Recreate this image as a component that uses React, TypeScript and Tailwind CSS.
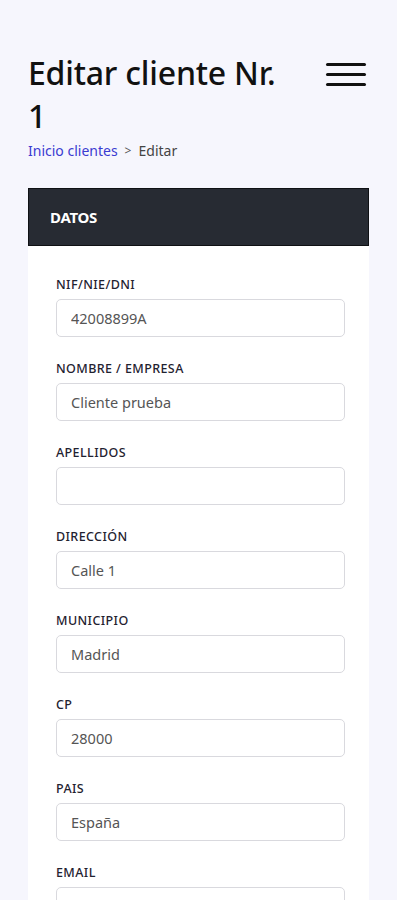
const fields = [
  { label: "NIF/NIE/DNI", value: "42008899A" },
  { label: "NOMBRE / EMPRESA", value: "Cliente prueba" },
  { label: "APELLIDOS", value: "" },
  { label: "DIRECCIÓN", value: "Calle 1" },
  { label: "MUNICIPIO", value: "Madrid" },
  { label: "CP", value: "28000" },
  { label: "PAIS", value: "España" },
  { label: "EMAIL", value: "" },
];

export default function App() {
  return (
    <div
      className="min-h-screen bg-[#f6f6fd] px-7 pt-[51px]"
      style={{ fontFamily: '"Noto Sans", "Open Sans", sans-serif' }}
    >
      {/* Header */}
      <div className="flex items-start justify-between">
        <h1 className="text-[32px] leading-[43px] font-medium text-[#111] tracking-[-0.2px] w-[262px]">
          Editar cliente Nr. 1
        </h1>
        <button className="mt-[12px] mr-[3px] flex flex-col gap-[7px]">
          <span className="block w-[40px] h-[3px] bg-[#111] rounded-sm" />
          <span className="block w-[40px] h-[3px] bg-[#111] rounded-sm" />
          <span className="block w-[40px] h-[3px] bg-[#111] rounded-sm" />
        </button>
      </div>

      {/* Breadcrumb */}
      <div className="mt-[5px] flex items-center gap-[7px] text-[14px] leading-[18px]">
        <span className="text-[#3b3bd1]">Inicio clientes</span>
        <span className="text-[#555] text-[12px]">&gt;</span>
        <span className="text-[#444]">Editar</span>
      </div>

      {/* Card */}
      <div className="mt-[28px] bg-white">
        <div className="h-[58px] bg-[#272b33] flex items-center px-[21px] border border-black/60">
          <span className="text-white font-bold text-[15px] tracking-[-0.3px]">DATOS</span>
        </div>
        <div className="pl-[28px] pr-[24px] pt-[30px] pb-6 flex flex-col gap-[23px]">
          {fields.map((f) => (
            <div key={f.label} className="flex flex-col">
              <label className="text-[12.5px] leading-[17px] font-medium text-[#1f2230] tracking-[0.4px] mb-[6px]">
                {f.label}
              </label>
              <input
                readOnly
                value={f.value}
                className="h-[38px] w-full rounded-[5px] border border-[#d9d9de] px-[14px] text-[14.5px] text-[#555] outline-none"
              />
            </div>
          ))}
        </div>
      </div>
    </div>
  );
}
